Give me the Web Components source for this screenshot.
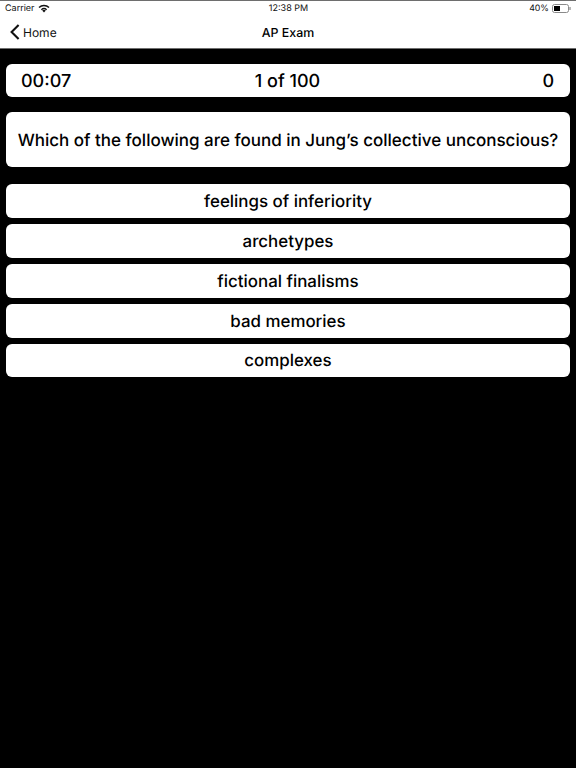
<!DOCTYPE html>
<html>
<head>
<meta charset="utf-8">
<title>AP Exam</title>
<style>
  html, body { margin: 0; background: #000; }
  body { width: 576px; height: 768px; overflow: hidden; font-family: Inter, "Liberation Sans", sans-serif; text-rendering: geometricPrecision; }
</style>
</head>
<body>
<exam-header></exam-header>
<exam-quiz>
  <exam-score timer="00:07" progress="1 of 100" score="0"></exam-score>
  <exam-question>Which of the following are found in Jung’s collective unconscious?</exam-question>
  <exam-answers>
    <exam-answer>feelings of inferiority</exam-answer>
    <exam-answer>archetypes</exam-answer>
    <exam-answer>fictional finalisms</exam-answer>
    <exam-answer>bad memories</exam-answer>
    <exam-answer>complexes</exam-answer>
  </exam-answers>
</exam-quiz>
<script>
class ExamHeader extends HTMLElement {
  constructor() {
    super();
    this.attachShadow({ mode: "open" });
    this.shadowRoot.innerHTML = `
      <style>
        :host { display: block; background: #fff; color: #000; border-top: 1px solid #6e6e6e; border-bottom: 1px solid #6e6e6e; box-sizing: border-box; height: 49px; }
        .status { display: grid; grid-template-columns: 1fr auto 1fr; align-items: center; height: 15px; padding: 0 5px; font-size: 9px; color: #111; }
        .left { display: flex; align-items: center; gap: 3px; }
        .right { display: flex; align-items: center; justify-content: flex-end; gap: 3px; font-size: 8.8px; }
        .time { padding-left: 1px; }
        .nav { display: grid; grid-template-columns: 1fr auto 1fr; align-items: center; height: 32px; padding: 0 10px; }
        .back { display: flex; align-items: center; gap: 3px; color: #111; font-size: 12px; }
        .title { font-size: 12.4px; font-weight: 500; color: #000; }
        svg { display: block; }
      </style>
      <div class="status">
        <div class="left">
          <span>Carrier</span>
          <svg width="12" height="9" viewBox="0 0 12 9"><path d="M6 8.6 4.2 6.6a2.7 2.7 0 0 1 3.6 0Z" fill="#111"/><path d="M2.9 5.2a4.6 4.6 0 0 1 6.2 0l-.9 1a3.3 3.3 0 0 0-4.4 0Z" fill="#111"/><path d="M.5 2.9a8 8 0 0 1 11 0l-1 1.1a6.5 6.5 0 0 0-9 0Z" fill="#111"/></svg>
        </div>
        <span class="time">12:38 PM</span>
        <div class="right">
          <span>40%</span>
          <svg width="19" height="9" viewBox="0 0 19 9"><rect x=".5" y=".5" width="16" height="8" rx="2" fill="none" stroke="#8a8a8a"/><rect x="2" y="2" width="6" height="5" fill="#000"/><rect x="17.4" y="3" width="1.2" height="3" fill="#8a8a8a"/></svg>
        </div>
      </div>
      <div class="nav">
        <div class="back">
          <svg width="10" height="16" viewBox="0 0 10 16"><path d="M8.6 1 1.6 8l7 7" fill="none" stroke="#111" stroke-width="2.1"/></svg>
          <span>Home</span>
        </div>
        <span class="title">AP Exam</span>
      </div>`;
  }
}

class ExamQuiz extends HTMLElement {
  constructor() {
    super();
    this.attachShadow({ mode: "open" });
    this.shadowRoot.innerHTML = `
      <style>
        :host { display: flex; flex-direction: column; padding: 15px 6px 0; }
      </style>
      <slot></slot>`;
  }
}

class ExamScore extends HTMLElement {
  constructor() {
    super();
    this.attachShadow({ mode: "open" });
    this.shadowRoot.innerHTML = `
      <style>
        :host { display: grid; grid-template-columns: 1fr auto 1fr; align-items: center; height: 33px; padding: 1px 16px 0 15px; box-sizing: border-box; background: #fff; border-radius: 6px; color: #000; font-size: 18px; font-weight: 500; }
        .score { text-align: right; }
      </style>
      <span></span><span></span><span class="score"></span>`;
  }
  connectedCallback() {
    const spans = this.shadowRoot.querySelectorAll("span");
    spans[0].textContent = this.getAttribute("timer");
    spans[1].textContent = this.getAttribute("progress");
    spans[2].textContent = this.getAttribute("score");
  }
}

class ExamQuestion extends HTMLElement {
  constructor() {
    super();
    this.attachShadow({ mode: "open" });
    this.shadowRoot.innerHTML = `
      <style>
        :host { display: flex; align-items: center; justify-content: center; height: 55px; margin-top: 15px; padding-top: 2px; box-sizing: border-box; background: #fff; border-radius: 6px; color: #000; font-size: 17px; font-weight: 500; white-space: nowrap; }
      </style>
      <slot></slot>`;
  }
}

class ExamAnswers extends HTMLElement {
  constructor() {
    super();
    this.attachShadow({ mode: "open" });
    this.shadowRoot.innerHTML = `
      <style>
        :host { display: flex; flex-direction: column; gap: 6px; margin-top: 17px; }
      </style>
      <slot></slot>`;
  }
}

class ExamAnswer extends HTMLElement {
  constructor() {
    super();
    this.attachShadow({ mode: "open" });
    this.shadowRoot.innerHTML = `
      <style>
        :host { display: flex; align-items: center; justify-content: center; height: 34px; background: #fff; border-radius: 6px; color: #000; font-size: 16.9px; font-weight: 500; padding-top: 1px; box-sizing: border-box; }
        :host(:last-child) { height: 33px; }
      </style>
      <slot></slot>`;
  }
}

customElements.define("exam-header", ExamHeader);
customElements.define("exam-quiz", ExamQuiz);
customElements.define("exam-score", ExamScore);
customElements.define("exam-question", ExamQuestion);
customElements.define("exam-answers", ExamAnswers);
customElements.define("exam-answer", ExamAnswer);
</script>
</body>
</html>
